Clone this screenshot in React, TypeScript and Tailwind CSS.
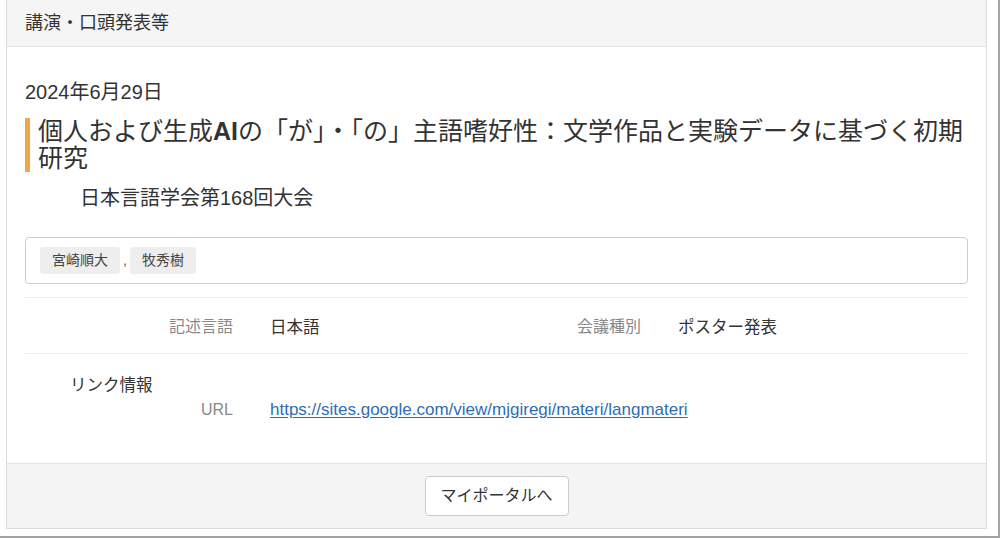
import React from "react";

const font = {
  fontFamily: '"Liberation Sans", "Noto Sans CJK JP", sans-serif',
};

function Tag({ children }: { children: React.ReactNode }) {
  return (
    <span className="inline-flex h-[27px] items-center rounded-[3px] bg-[#eeeeee] px-[12px] text-[14px] text-[#444]">
      {children}
    </span>
  );
}

export default function App() {
  return (
    <div
      className="h-[538px] w-[1000px] overflow-hidden border-r-2 border-b-2 border-[#a3a3a3] bg-white text-[#333]"
      style={font}
    >
      <div className="ml-[6px] flex h-[529px] w-[981px] flex-col border-x border-b border-[#dddddd]">
        {/* header */}
        <div className="flex h-[47px] items-center border-b border-[#e3e3e3] bg-[#f5f5f5] px-[18px] pt-[1px] text-[18px] text-[#333]">
          講演・口頭発表等
        </div>

        {/* body */}
        <div className="flex-1 px-[18px] pt-[33px]">
          <div className="text-[20px] leading-[24px]">2024年6月29日</div>

          <h1 className="mt-[14px] border-l-[5px] border-[#eda84c] pl-[8px] text-[25px] leading-[27px] text-[#333]">
            個人および生成<span className="font-bold">AI</span>の「が」・「の」主語嗜好性：文学作品と実験データに基づく初期研究
          </h1>

          <div className="mt-[14px] pl-[55px] text-[20px] leading-[24px]">
            日本言語学会第168回大会
          </div>

          <div className="mt-[27px] flex h-[47px] items-center gap-[3px] rounded-[4px] border border-[#cccccc] px-[14px]">
            <Tag>宮崎順大</Tag>
            <span className="text-[14px] text-[#555]">,</span>
            <Tag>牧秀樹</Tag>
          </div>

          <div className="mt-[13px] border-t border-[#eeeeee]" />

          <div className="flex h-[55px] items-center pt-[3px] text-[16px]">
            <div className="flex w-[472px] items-center">
              <div className="w-[208px] text-right text-[#888]">記述言語</div>
              <div className="pl-[37px] text-[16.5px]">日本語</div>
            </div>
            <div className="flex items-center">
              <div className="w-[144px] text-right text-[#888]">会議種別</div>
              <div className="pl-[37px] text-[16.5px]">ポスター発表</div>
            </div>
          </div>

          <div className="border-t border-[#eeeeee]" />

          <div className="pt-[20px] text-[16px]">
            <div className="pl-[45px] text-[16.5px] leading-[22px]">リンク情報</div>
            <div className="mt-[3px] flex items-center leading-[22px]">
              <div className="w-[208px] text-right text-[#888]">URL</div>
              <a
                href="#"
                className="pl-[37px] text-[17px] text-[#2f6db3] underline underline-offset-2"
              >
                https://sites.google.com/view/mjgiregi/materi/langmateri
              </a>
            </div>
          </div>
        </div>

        {/* footer */}
        <div className="flex h-[65px] items-center justify-center border-t border-[#e3e3e3] bg-[#f4f4f4]">
          <button
            type="button"
            className="h-[40px] w-[144px] rounded-[4px] border border-[#cccccc] bg-white text-[16px] text-[#333]"
          >
            マイポータルへ
          </button>
        </div>
      </div>
    </div>
  );
}
